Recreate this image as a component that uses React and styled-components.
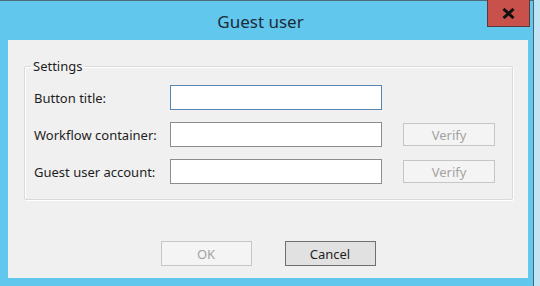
import React from "react";
import styled, { createGlobalStyle } from "styled-components";

const Global = createGlobalStyle`
  html, body { margin: 0; padding: 0; }
  body { font-family: "Noto Sans", "Open Sans", "Liberation Sans", sans-serif; }
`;

const Screen = styled.div`
  width: 540px;
  height: 286px;
  overflow: hidden;
  background: #bfe5f4;
`;

const Window = styled.div`
  width: 534px;
  height: 286px;
  box-sizing: border-box;
  background: #62c7ec;
  border-top: 1px solid #4f6b7a;
  border-right: 1px solid #4a6272;
  display: flex;
  flex-direction: column;
  padding: 0 6px 0 8px;
`;

const TitleBar = styled.div`
  height: 39px;
  position: relative;
  display: flex;
  align-items: center;
  justify-content: center;
`;

const Title = styled.div`
  font-size: 17px;
  color: #1b2b3a;
  padding-right: 14px;
  margin-top: 1px;
`;

const CloseButton = styled.button`
  position: absolute;
  top: -1px;
  right: -3px;
  width: 43px;
  height: 27px;
  box-sizing: border-box;
  background: #c9514b;
  border: 1px solid #5a3a38;
  border-top: none;
  display: flex;
  align-items: center;
  justify-content: center;
  padding: 0;
`;

const Content = styled.div`
  width: 520px;
  height: 238px;
  background: #f0f0f0;
  box-sizing: border-box;
  padding: 18px 15px 0 16px;
  display: flex;
  flex-direction: column;
`;

const Group = styled.fieldset`
  margin: 0;
  height: 142px;
  box-sizing: border-box;
  border: 1px solid #d9d9d9;
  box-shadow: inset 1px 1px 0 #ffffff, 1px 1px 0 #ffffff;
  border-radius: 2px;
  padding: 11px 0 0 9px;
  display: grid;
  grid-template-columns: 115px 212px 92px;
  column-gap: 21px;
  row-gap: 12px;
  align-content: start;
  align-items: center;
`;

const Legend = styled.legend`
  font-size: 13px;
  line-height: 16px;
  color: #1e1e1e;
  padding: 0 2px;
  margin-left: -3px;
`;

const Label = styled.label`
  font-size: 13px;
  color: #1e1e1e;
  white-space: nowrap;
`;

const Input = styled.input`
  height: 25px;
  box-sizing: border-box;
  margin: 0;
  border: 1px solid ${(p) => (p.$focused ? "#5a86b2" : "#8c8c8c")};
  background: #ffffff;
  outline: none;
`;

const Button = styled.button`
  height: ${(p) => p.$h}px;
  width: ${(p) => p.$w}px;
  box-sizing: border-box;
  margin: 0;
  padding: 0;
  font-family: inherit;
  font-size: 13px;
  border: 1px solid ${(p) => (p.disabled ? "#c6c6c6" : "#707070")};
  background: ${(p) => (p.disabled ? "#f4f4f4" : "#e1e1e1")};
  color: ${(p) => (p.disabled ? "#a3a3a3" : "#1e1e1e")};
`;

const Empty = styled.span``;

const Footer = styled.div`
  display: flex;
  justify-content: center;
  gap: 33px;
  margin-top: 41px;
  padding-right: 1px;
`;

export default function App() {
  return (
    <Screen>
      <Global />
      <Window>
        <TitleBar>
          <Title>Guest user</Title>
          <CloseButton aria-label="Close">
            <svg width="13" height="11" viewBox="0 0 13 11">
              <path d="M1.5 1 L11.5 10 M11.5 1 L1.5 10" stroke="#111" strokeWidth="3" />
            </svg>
          </CloseButton>
        </TitleBar>
        <Content>
          <Group>
            <Legend>Settings</Legend>
            <Label>Button title:</Label>
            <Input $focused />
            <Empty />
            <Label>Workflow container:</Label>
            <Input />
            <Button disabled $w={92} $h={23}>Verify</Button>
            <Label>Guest user account:</Label>
            <Input />
            <Button disabled $w={92} $h={23}>Verify</Button>
          </Group>
          <Footer>
            <Button disabled $w={91} $h={25}>OK</Button>
            <Button $w={91} $h={25}>Cancel</Button>
          </Footer>
        </Content>
      </Window>
    </Screen>
  );
}
